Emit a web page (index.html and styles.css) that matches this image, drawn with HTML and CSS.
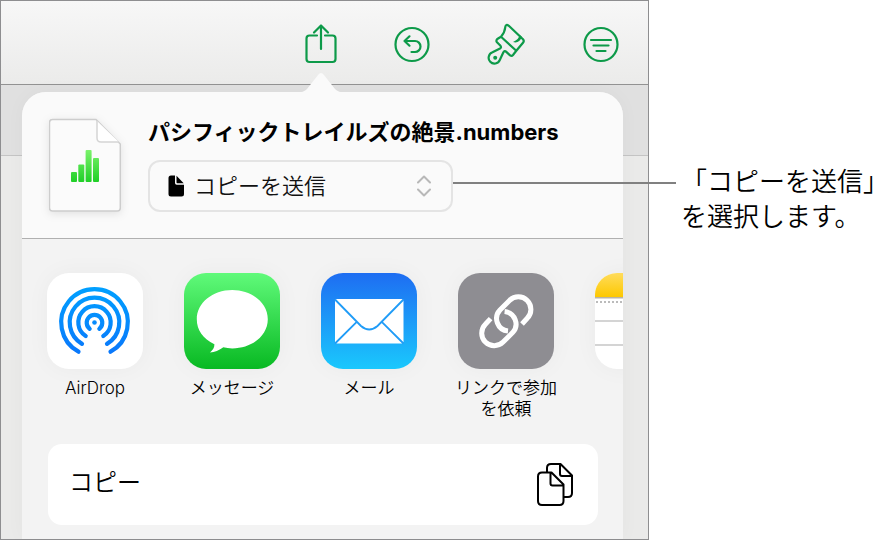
FILE: index.html
```
<!DOCTYPE html>
<html lang="ja">
<head>
<meta charset="utf-8">
<meta name="viewport" content="width=device-width, initial-scale=1">
<title>コピーを送信</title>
<link rel="stylesheet" href="styles.css">
</head>
<body>
<main class="device">
  <nav class="toolbar">
    <button class="tool" type="button" aria-label="共有">
      <svg width="36" height="44" viewBox="0 0 36 44"><path d="M14 13.500H6.500a3 3 0 0 0-3 3V37a3 3 0 0 0 3 3h23a3 3 0 0 0 3-3V16.500a3 3 0 0 0-3-3H22M18 27V3.500M11 10.500l7-7 7 7"/></svg>
    </button>
    <button class="tool" type="button" aria-label="取り消す">
      <svg width="36" height="44" viewBox="0 0 36 44"><circle cx="18" cy="22.500" r="16.500"/><path d="M15.500 14.300l-5 4.700 5 4.700M10.500 19H21a5.500 5.500 0 0 1 0 11h-3.500"/></svg>
    </button>
    <button class="tool" type="button" aria-label="フォーマット">
      <svg width="43" height="44" viewBox="0 0 43 44"><path d="M16 14.700C18.800 11.700 20 8 20.300 5Q20.800 1.500 23.800 3.800L38 17.300Q39.500 19 38 20.700L31.300 28.800ZM16 14.700L12.300 17Q10.700 18.800 12 20.300L15.500 23.800Q16.700 25.500 15 26.600L7.500 30.300A5.800 5.800 0 1 0 14.800 38L18.400 30.300Q19.600 28.300 21.300 29.900L25.100 33.400Q26.700 34.500 28 33L31.300 28.800"/><path class="dot" d="M37 15L34.500 12.800Q34 17.500 28 20Q34 22 37 15Z"/><circle class="dot" cx="10.200" cy="35.700" r="2"/></svg>
    </button>
    <button class="tool" type="button" aria-label="整理">
      <svg width="36" height="44" viewBox="0 0 36 44"><circle cx="18" cy="22.500" r="16.500"/><path d="M8 18h20M10.500 23.500h15M13.500 29h9"/></svg>
    </button>
  </nav>
  <div class="stage">
    <section class="popover">
      <svg class="arrow" width="50" height="21" viewBox="0 0 50 21"><path d="M0 21V20.500Q8 20.500 11 17L22 3Q25-1 28 3L39 17Q42 20.500 50 20.500V21Z"/></svg>
      <header class="head">
        <svg class="doc" width="72" height="96" viewBox="0 0 72 96">
          <defs><linearGradient id="bars" x1="0" y1="34" x2="0" y2="66" gradientUnits="userSpaceOnUse"><stop offset="0" stop-color="#7cf36c"/><stop offset="1" stop-color="#1fcf27"/></linearGradient></defs>
          <path d="M3.500 3.500H47L71.300 28V92q0 3-3 3H3.500q-3 0-3-3V6.500q0-3 3-3Z" fill="#fbfbfb" stroke="#cdcdcd" stroke-width="1.500"/>
          <path d="M48 5V22q0 4 4 4H70" fill="#fff" stroke="#d5d5d5" stroke-width="1.500"/>
          <g fill="url(#bars)"><rect x="22" y="56" width="6" height="10" rx="1"/><rect x="29.300" y="48.500" width="6" height="17.500" rx="1"/><rect x="36.600" y="34" width="6" height="32" rx="1"/><rect x="44" y="42" width="6" height="24" rx="1"/></g>
        </svg>
        <div class="info">
          <h1 class="title">パシフィックトレイルズの絶景.numbers</h1>
          <div class="picker">
            <svg class="picker-file" width="16" height="22" viewBox="0 0 16 22"><path d="M3 .5H7V8q0 1.700 1.700 1.700H16V19q0 2.500-2.500 2.500H3Q.500 21.500.500 19V3Q.500.500 3 .500ZM8.500.800L15.700 8.300H9.300Q8.500 8.300 8.500 7.500Z"/></svg>
            <select class="picker-select" aria-label="共有方法"><option>コピーを送信</option></select>
            <svg class="picker-chevrons" width="14" height="22" viewBox="0 0 14 22"><path d="M1 7.500L7 1.500l6 6M1 14.500l6 6 6-6"/></svg>
          </div>
        </div>
      </header>
      <div class="apps">
        <button class="app" type="button">
          <svg class="app-icon" width="96" height="96" viewBox="0 0 96 96">
            <defs><linearGradient id="air" x1="0" y1="14" x2="0" y2="80" gradientUnits="userSpaceOnUse"><stop offset="0" stop-color="#00a0ff"/><stop offset="1" stop-color="#0a78fb"/></linearGradient></defs>
            <rect width="96" height="96" fill="#fff"/>
            <g fill="none" stroke="url(#air)" stroke-width="4.200" stroke-linecap="round"><path d="M31.500 78.700A33.300 33.300 0 1 1 63.500 78.700"/><path d="M35 70.900A24.800 24.800 0 1 1 60 70.900"/><path d="M38.700 63A16.200 16.200 0 1 1 56.300 63"/><path d="M42.700 55.800A7.800 7.800 0 1 1 52.300 55.800"/></g>
            <circle cx="47.500" cy="49.500" r="2.300" fill="#078bfd"/>
          </svg>
          <span class="app-name">AirDrop</span>
        </button>
        <button class="app" type="button">
          <svg class="app-icon" width="96" height="96" viewBox="0 0 96 96">
            <defs><linearGradient id="msg" x1="0" y1="0" x2="0" y2="1"><stop offset="0" stop-color="#60fa7a"/><stop offset="1" stop-color="#08b922"/></linearGradient></defs>
            <rect width="96" height="96" fill="url(#msg)"/>
            <path fill="#fff" d="M48.300 17C68 17 83.800 30 83.800 46.300S68 75.400 48.300 75.400Q43.500 75.400 39.300 74.300Q33 79 26 79.600C29 77 30.500 74.500 30.400 71.300C19 66 12.800 57 12.800 46.300C12.800 30 28.500 17 48.300 17Z"/>
          </svg>
          <span class="app-name">メッセージ</span>
        </button>
        <button class="app" type="button">
          <svg class="app-icon" width="96" height="96" viewBox="0 0 96 96">
            <defs><linearGradient id="mail" x1="0" y1="0" x2="0" y2="1"><stop offset="0" stop-color="#1e6df2"/><stop offset="1" stop-color="#1ac8fd"/></linearGradient></defs>
            <rect width="96" height="96" fill="url(#mail)"/>
            <rect x="14" y="26" width="68.500" height="44.500" rx="2" fill="#fff"/>
            <path d="M14 26.500L40 53Q48.200 60 56.500 53L82.500 26.500M14 70.500L36 48.700M82.500 70.500L60.500 48.700" fill="none" stroke="#209cf7" stroke-width="1.800"/>
          </svg>
          <span class="app-name">メール</span>
        </button>
        <button class="app" type="button">
          <svg class="app-icon" width="96" height="96" viewBox="0 0 96 96">
            <rect width="96" height="96" fill="#8e8d92"/>
            <g fill="none" stroke="#fff" stroke-width="5"><path id="ring" d="M64 51L69.200 45.300A12.500 12.500 0 0 0 51.500 27.500L42 37A12.500 12.500 0 0 0 50 58"/><use href="#ring" transform="rotate(180 48.300 48.300)"/></g>
          </svg>
          <span class="app-name">リンクで参加<br>を依頼</span>
        </button>
        <button class="app" type="button" aria-label="メモ">
          <svg class="app-icon" width="96" height="96" viewBox="0 0 96 96">
            <defs><linearGradient id="memo" x1="0" y1="0" x2="0" y2="1"><stop offset="0" stop-color="#ffdc5c"/><stop offset="1" stop-color="#fdc800"/></linearGradient></defs>
            <rect width="96" height="96" fill="#fff"/>
            <rect width="96" height="24" fill="url(#memo)"/>
            <path d="M0 24.800H96" stroke="#b9b4a4" stroke-width="1.600"/>
            <path d="M1 29H96" stroke="#bbb" stroke-width="2" stroke-dasharray="2 2"/>
            <path d="M0 48H96M0 72H96" stroke="#c6c6c6" stroke-width="1.500"/>
          </svg>
        </button>
      </div>
      <button class="action" type="button">
        <span>コピー</span>
        <svg width="38" height="46" viewBox="0 0 38 46"><path d="M11 10.500V6q0-4 4-4h9.500L36 13.500V31q0 4-4 4h-4.500M24 2.500V12q0 2 2 2h9.500M6 10.500h9.500L27.500 22.500V39q0 4-4 4H6q-4 0-4-4V14.500q0-4 4-4ZM14.500 11V21.500q0 2 2 2H27"/></svg>
      </button>
    </section>
  </div>
</main>
<aside class="note">「コピーを送信」<br>を選択します。</aside>
<div class="leader"></div>
</body>
</html>
```
FILE: styles.css
```
* {
  box-sizing: border-box;
}

body {
  position: relative;
  display: flex;
  align-items: flex-start;
  margin: 0;
  background: #fff;
  color: #000;
  font-family: Inter, "Noto Sans CJK JP", sans-serif;
  font-weight: 350;
}

button {
  margin: 0;
  padding: 0;
  border: 0;
  background: none;
  color: inherit;
  font: inherit;
}

svg {
  display: block;
  flex: none;
}

.device {
  flex: 1;
  min-width: 0;
  border: 1px solid #8e8e90;
}

.toolbar {
  display: flex;
  justify-content: flex-end;
  gap: 55px;
  padding: 21px 29px 18px;
  border-bottom: 1px solid #929292;
  background: linear-gradient(#f7f7f7, #ebebea);
}

.tool svg {
  fill: none;
  stroke: #0d9a49;
  stroke-width: 2.2;
  stroke-linecap: round;
  stroke-linejoin: round;
}

.tool .dot {
  fill: #0d9a49;
  stroke: none;
}

.stage {
  padding: 7px 25px 0 21px;
  background: linear-gradient(#e0e0e0 70px, #c4c4c4 70px, #c4c4c4 71px, #eaeae9 71px);
}

.popover {
  position: relative;
  padding-bottom: 14px;
  border-radius: 24px 24px 0 0;
  background: #f3f3f3;
  box-shadow: 0 0 20px rgba(0, 0, 0, 0.03);
}

.arrow {
  position: absolute;
  top: -20px;
  left: 274px;
  fill: #fafafa;
}

.head {
  display: flex;
  gap: 27px;
  padding: 24px 27px 26px;
  border-bottom: 1px solid #b0b0b0;
  border-radius: 24px 24px 0 0;
  background: #fafafa;
}

.doc {
  filter: drop-shadow(0 2px 4px rgba(0, 0, 0, 0.1));
}

.info {
  display: flex;
  flex-direction: column;
  gap: 12px;
}

.title {
  margin: 0;
  font-size: 22px;
  font-weight: 700;
  line-height: 32px;
  white-space: nowrap;
}

.picker {
  display: grid;
  align-items: center;
  width: 305px;
}

.picker > * {
  grid-area: 1 / 1;
}

.picker-select {
  width: 100%;
  height: 52px;
  padding: 0 44px;
  border: 2px solid #e4e4e4;
  border-radius: 12px;
  background: transparent;
  color: #111;
  font: 350 22px Inter, "Noto Sans CJK JP", sans-serif;
  appearance: none;
}

.picker-file {
  margin-left: 20px;
}

.picker-chevrons {
  justify-self: end;
  margin-right: 22px;
  fill: none;
  stroke: #b8b8b8;
  stroke-width: 2;
  stroke-linecap: round;
  stroke-linejoin: round;
}

.apps {
  display: flex;
  gap: 17px;
  overflow: hidden;
  padding: 34px 0 24px 13px;
}

.app {
  display: flex;
  flex: none;
  flex-direction: column;
  align-items: center;
  gap: 9px;
  width: 120px;
}

.app-icon {
  border-radius: 22px;
  box-shadow: 0 0 24px rgba(0, 0, 0, 0.04);
}

.app-name {
  font-size: 17px;
  line-height: 21px;
}

.action {
  display: flex;
  align-items: center;
  justify-content: space-between;
  width: calc(100% - 51px);
  height: 81px;
  margin: 0 26px;
  padding: 0 24px 0 21px;
  border-radius: 14px;
  background: #fff;
  font-size: 24px;
  line-height: 32px;
}

.action span {
  padding-bottom: 4px;
}

.action svg {
  fill: none;
  stroke: #000;
  stroke-width: 2;
  stroke-linejoin: round;
}

.note {
  padding: 164px 5px 0 32px;
  font-size: 26px;
  line-height: 35px;
  white-space: nowrap;
}

.leader {
  position: absolute;
  top: 182px;
  right: 218px;
  left: 453px;
  height: 2px;
  background: #808080;
}
```
